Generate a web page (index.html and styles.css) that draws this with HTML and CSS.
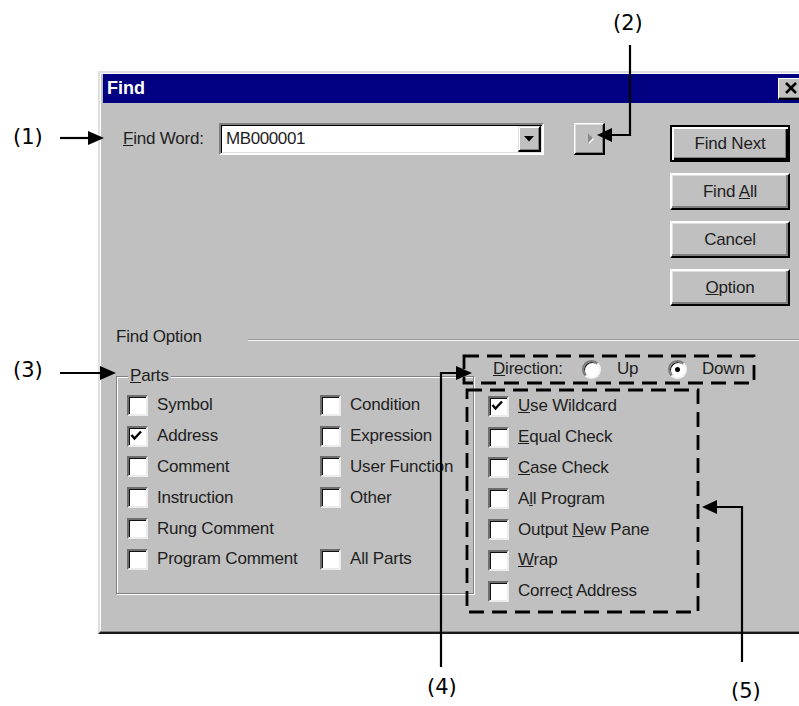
FILE: index.html
```html
<!DOCTYPE html>
<html lang="en">
<head>
<meta charset="utf-8">
<title>Find</title>
<link rel="stylesheet" href="styles.css">
</head>
<body>
<div class="stage">
  <div class="dialog">
    <div class="titlebar">
      <span class="title">Find</span>
      <span class="close"><svg width="14" height="12" viewBox="0 0 14 12"><path d="M2 1 L12 11 M12 1 L2 11" stroke="#000" stroke-width="2.6"/></svg></span>
    </div>
    <div class="content">
      <div class="top">
        <span class="fw-label"><u>F</u>ind Word:</span>
        <div class="combo">
          <span class="combo-text">MB000001</span>
          <span class="combo-btn"><svg width="10" height="6" viewBox="0 0 10 6"><path d="M0 0 H10 L5 5.5 Z" fill="#000"/></svg></span>
        </div>
        <span class="arrowbtn"><svg width="27" height="28" viewBox="0 0 27 28"><path d="M13 9 V19 L18 14 Z" fill="#fff" transform="translate(1 1)"/><path d="M13 9 V19 L18 14 Z" fill="#8a8a8a"/></svg></span>
        <div class="buttons">
          <span class="btn default"><span>Find Next</span></span>
          <span class="btn"><span>Find <u>A</u>ll</span></span>
          <span class="btn"><span>Cancel</span></span>
          <span class="btn"><span><u>O</u>ption</span></span>
        </div>
      </div>
      <div class="option-row">
        <span class="option-label">Find Option</span>
        <span class="sep"></span>
      </div>
      <div class="lower">
        <div class="group">
          <div class="group-title"><span><u>P</u>arts</span></div>
          <div class="parts-grid">
            <div class="row"><span class="cb"></span><span class="lbl">Symbol</span></div>
            <div class="row"><span class="cb"></span><span class="lbl">Condition</span></div>
            <div class="row"><span class="cb checked"><svg width="17" height="17" viewBox="0 0 17 17"><path d="M2.5 7 L5.5 10.5 L12 3.5" fill="none" stroke="#000" stroke-width="2.4"/></svg></span><span class="lbl">Address</span></div>
            <div class="row"><span class="cb"></span><span class="lbl">Expression</span></div>
            <div class="row"><span class="cb"></span><span class="lbl">Comment</span></div>
            <div class="row"><span class="cb"></span><span class="lbl">User Function</span></div>
            <div class="row"><span class="cb"></span><span class="lbl">Instruction</span></div>
            <div class="row"><span class="cb"></span><span class="lbl">Other</span></div>
            <div class="row"><span class="cb"></span><span class="lbl">Rung Comment</span></div>
            <div class="row empty"></div>
            <div class="row"><span class="cb"></span><span class="lbl">Program Comment</span></div>
            <div class="row"><span class="cb"></span><span class="lbl">All Parts</span></div>
          </div>
        </div>
        <div class="right-col">
          <div class="direction">
            <span class="dir-label"><u>D</u>irection:</span>
            <span class="radio"></span>
            <span class="radio-lbl up">Up</span>
            <span class="radio on"></span>
            <span class="radio-lbl down">Down</span>
          </div>
          <div class="opt-list">
            <div class="row"><span class="cb checked"><svg width="17" height="17" viewBox="0 0 17 17"><path d="M2.5 7 L5.5 10.5 L12 3.5" fill="none" stroke="#000" stroke-width="2.4"/></svg></span><span class="lbl"><u>U</u>se Wildcard</span></div>
            <div class="row"><span class="cb"></span><span class="lbl"><u>E</u>qual Check</span></div>
            <div class="row"><span class="cb"></span><span class="lbl"><u>C</u>ase Check</span></div>
            <div class="row"><span class="cb"></span><span class="lbl">A<u>l</u>l Program</span></div>
            <div class="row"><span class="cb"></span><span class="lbl">Output <u>N</u>ew Pane</span></div>
            <div class="row"><span class="cb"></span><span class="lbl"><u>W</u>rap</span></div>
            <div class="row"><span class="cb"></span><span class="lbl">Correc<u>t</u> Address</span></div>
          </div>
        </div>
      </div>
    </div>
  </div>

  <svg class="marks" width="799" height="706" viewBox="0 0 799 706">
    <g stroke="#000" stroke-width="2.2" fill="none">
      <line x1="60" y1="138" x2="90" y2="138"/>
      <polyline points="630,45 630,135 611,135"/>
      <line x1="60" y1="373" x2="102" y2="373"/>
      <polyline points="441,667 441,373 458,373"/>
      <polyline points="742,662 742,507 716,507"/>
    </g>
    <g fill="#000">
      <polygon points="88,131 104,138 88,145"/>
      <polygon points="612,128 597,135 612,142"/>
      <polygon points="100,366 116,373 100,380"/>
      <polygon points="456,366 472,373 456,380"/>
      <polygon points="717,500 702,507 717,514"/>
    </g>
    <g stroke="#000" stroke-width="2.8" fill="none" stroke-dasharray="15 8">
      <rect x="464" y="356" width="290" height="27"/>
      <rect x="467" y="390" width="231" height="222"/>
    </g>
  </svg>
  <span class="tag t1">(1)</span>
  <span class="tag t2">(2)</span>
  <span class="tag t3">(3)</span>
  <span class="tag t4">(4)</span>
  <span class="tag t5">(5)</span>
</div>
</body>
</html>
```

FILE: styles.css
```css
html, body {
  margin: 0;
  padding: 0;
  background: #fff;
}

.stage {
  position: relative;
  width: 799px;
  height: 706px;
  overflow: hidden;
  box-sizing: border-box;
  padding: 71px 0 0 98px;
  font-family: "Liberation Sans", Arial, sans-serif;
}

.dialog {
  box-sizing: border-box;
  width: 715px;
  height: 563px;
  background: #c0c0c0;
  border-style: solid;
  border-width: 2px;
  border-color: #dfdfdf #000 #1a1a1a #dfdfdf;
  box-shadow: inset -1px -1px 0 #808080, inset 1px 1px 0 #fff;
  padding: 1px 3px 3px 3px;
  color: #1e1e1e;
  font-size: 17px;
  letter-spacing: -0.2px;
}

.titlebar {
  height: 29px;
  background: #000080;
  display: flex;
  align-items: center;
  justify-content: space-between;
  padding: 0 4px 0 4px;
}

.title {
  color: #fff;
  font-weight: bold;
  font-size: 18px;
  letter-spacing: 0;
}

.close {
  box-sizing: border-box;
  width: 26px;
  height: 22px;
  background: #c0c0c0;
  border-style: solid;
  border-width: 1px 2px 2px 1px;
  border-color: #fff #000 #000 #fff;
  box-shadow: inset -1px -1px 0 #808080;
  display: flex;
  align-items: center;
  justify-content: center;
}

.top {
  display: flex;
  align-items: flex-start;
  padding: 20px 0 0 20px;
}

.fw-label {
  width: 96px;
  height: 32px;
  line-height: 32px;
}

.combo {
  box-sizing: border-box;
  width: 325px;
  height: 32px;
  display: flex;
  background: #fff;
  border-style: solid;
  border-width: 2px;
  border-color: #808080 #fff #fff #808080;
  box-shadow: inset 1px 1px 0 #000, inset -1px -1px 0 #dfdfdf;
}

.combo-text {
  flex: 1;
  line-height: 28px;
  padding-left: 5px;
  letter-spacing: -0.4px;
}

.combo-btn {
  box-sizing: border-box;
  width: 23px;
  height: 26px;
  margin: 1px 1px 0 0;
  background: #c0c0c0;
  border-style: solid;
  border-width: 1px 2px 2px 1px;
  border-color: #dfdfdf #000 #000 #dfdfdf;
  box-shadow: inset 1px 1px 0 #fff, inset -1px -1px 0 #808080;
  display: flex;
  align-items: center;
  justify-content: center;
}

.arrowbtn {
  box-sizing: border-box;
  margin-left: 30px;
  width: 31px;
  height: 32px;
  background: #c0c0c0;
  border-style: solid;
  border-width: 1px 2px 2px 1px;
  border-color: #fff #000 #000 #fff;
  box-shadow: inset 1px 1px 0 #dfdfdf, inset -1px -1px 0 #808080;
  display: flex;
}

.buttons {
  margin-left: 65px;
  margin-top: 2px;
  display: flex;
  flex-direction: column;
  gap: 11px;
}

.btn {
  box-sizing: border-box;
  width: 120px;
  height: 37px;
  background: #c0c0c0;
  border-style: solid;
  border-width: 2px;
  border-color: #fff #000 #000 #fff;
  box-shadow: inset -2px -2px 0 #808080, inset 1px 1px 0 #dfdfdf;
  display: flex;
  align-items: center;
  justify-content: center;
  white-space: nowrap;
}

.btn.default {
  border-color: #000;
  box-shadow: inset 2px 2px 0 #fff, inset -2px -2px 0 #000, inset -3px -3px 0 #808080;
}

.option-row {
  display: flex;
  align-items: center;
  margin-top: 20px;
  padding-left: 13px;
  height: 22px;
}

.option-label {
  width: 132px;
  line-height: 22px;
}

.sep {
  flex: 1;
  margin-top: 5px;
  border-top: 1px solid #9a9a9a;
  border-bottom: 1px solid #f4f4f4;
}

.lower {
  display: flex;
  align-items: flex-start;
  margin-top: 7px;
  padding-left: 13px;
}

.group {
  box-sizing: border-box;
  width: 358px;
  margin-top: 21px;
  border: 1px solid #808080;
  box-shadow: inset 1px 1px 0 #fff, 1px 1px 0 #fff;
  padding: 0 0 18px 10px;
}

.group-title {
  display: flex;
  margin: -11px 0 0 1px;
  height: 20px;
  line-height: 20px;
}

.group-title span {
  background: #c0c0c0;
  padding: 0 2px;
}

.parts-grid {
  display: grid;
  grid-template-columns: 193px auto;
  grid-auto-rows: 30.8px;
  margin-top: 4px;
}

.row {
  display: flex;
  align-items: center;
  white-space: nowrap;
}

.cb {
  box-sizing: border-box;
  flex: none;
  width: 21px;
  height: 21px;
  background: #fff;
  border-style: solid;
  border-width: 2px;
  border-color: #6e6e6e #ececec #ececec #6e6e6e;
  box-shadow: inset 1px 1px 0 #111;
  display: flex;
  align-items: flex-start;
  justify-content: flex-start;
}

.lbl {
  margin-left: 9px;
}

.right-col {
  margin-left: 14px;
  display: flex;
  flex-direction: column;
}

.direction {
  height: 28px;
  display: flex;
  align-items: center;
  padding-left: 5px;
}

.dir-label {
  width: 89px;
}

.radio {
  box-sizing: border-box;
  position: relative;
  width: 19px;
  height: 19px;
  border-radius: 50%;
  background: #fff;
  border-style: solid;
  border-width: 2px;
  border-color: #7a7a7a #f4f4f4 #f4f4f4 #7a7a7a;
  box-shadow: inset 1px 1px 0 #222;
}

.radio.on::after {
  content: "";
  position: absolute;
  left: 5px;
  top: 5px;
  width: 5px;
  height: 5px;
  border-radius: 50%;
  background: #000;
}

.radio-lbl.up {
  margin-left: 16px;
  width: 51px;
}

.radio-lbl.down {
  margin-left: 15px;
}

.opt-list {
  margin-top: 8px;
  display: grid;
  grid-auto-rows: 30.8px;
}

.marks {
  position: absolute;
  left: 0;
  top: 0;
  pointer-events: none;
}

.tag {
  position: absolute;
  font-family: "DejaVu Sans", sans-serif;
  font-size: 21px;
  line-height: 26px;
  color: #000;
}

.t1 { left: 13px; top: 124px; }
.t2 { left: 613px; top: 10px; }
.t3 { left: 13px; top: 357px; }
.t4 { left: 427px; top: 674px; }
.t5 { left: 731px; top: 678px; }
```
